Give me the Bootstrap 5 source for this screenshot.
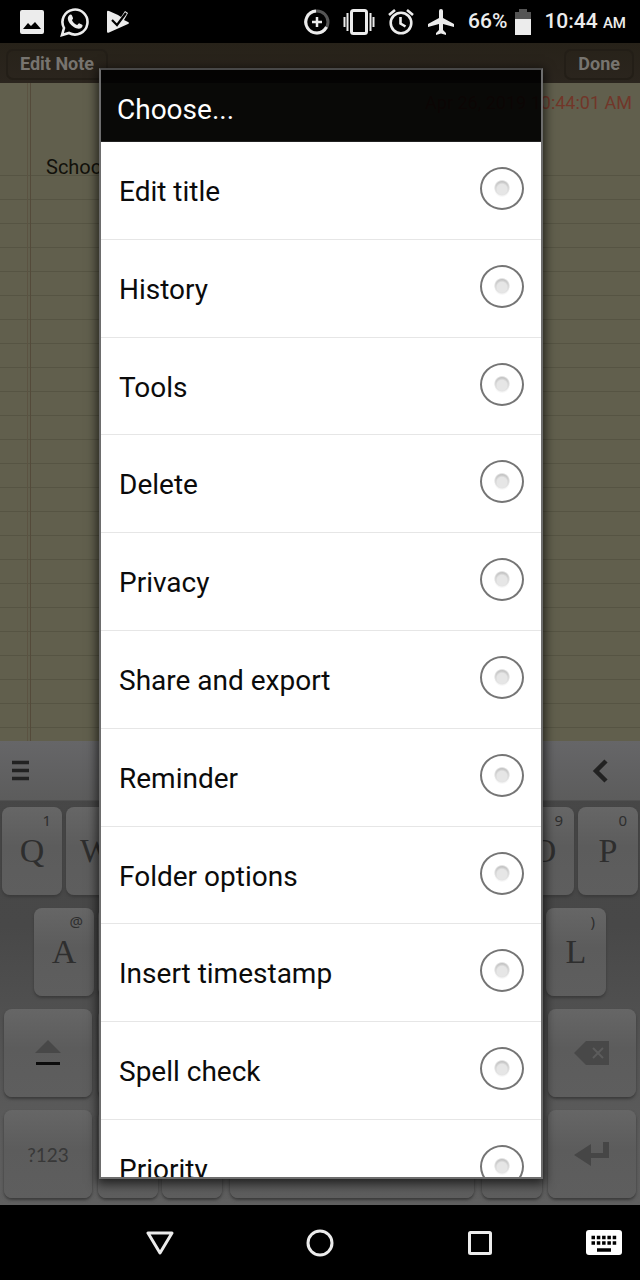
<!DOCTYPE html>
<html lang="en">
<head>
<meta charset="utf-8">
<meta name="viewport" content="width=device-width, initial-scale=1">
<title>Edit Note</title>
<link href="https://cdn.jsdelivr.net/npm/bootstrap@5.3.0/dist/css/bootstrap.min.css" rel="stylesheet">
<style>
body { font-family: Roboto, "Noto Sans", sans-serif; background: #000; line-height: 1.2; }
button { font-family: inherit; }
svg { display: block; flex: none; }

.status-bar { height: 43px; padding: 0 14px 0 20px; color: #ececec; font-size: 21px; font-weight: 500; }
.status-bar .ampm { font-size: 15px; }
.status-icons { gap: 13px; }

.note-bar { height: 40px; padding: 2px 6px 0; background: linear-gradient(#272219, #2b251e); }
.note-bar .btn { height: 31px; padding: 0 12px; font-size: 18px; font-weight: 700; line-height: 1; color: #77746f; border: 2px solid #231e17; border-radius: 7px; }

.paper { background-color: #615f4d; background-image:
    linear-gradient(90deg, transparent 27px, #5b5342 27px, #5b5342 28px, transparent 28px, transparent 30px, #544a3a 30px, #544a3a 31px, transparent 31px),
    repeating-linear-gradient(transparent 0 23px, #565443 23px 24px);
  background-position: 0 0, 0 69px; background-repeat: no-repeat; padding: 9px 8px 0 46px; }
.paper .stamp { font-size: 18px; color: #713629; }
.paper .note-text { font-size: 20px; color: #12110b; margin-top: 41px; }

.keyboard { background: linear-gradient(#464646, #484848 40%, #5c5c5c 85%, #5f5f5f); }
.suggest { height: 60px; padding: 0 32px 0 11px; background: linear-gradient(#666668, #5c5c5c); border-bottom: 1px solid #505050; }
.suggest .btn { padding: 0; border: 0; }
.keys { padding: 6px 0 7px; gap: 13px; }
.key-row { gap: 4px; padding: 0 2px; }
.key-row.inset { padding: 0 34px; }
.key-row.wide { gap: 6px; padding: 0 4px; }
.keycap { position: relative; flex: 1 1 0; min-width: 0; height: 88px; padding: 0; border: 0; border-radius: 8px; background: linear-gradient(#666, #5c5c5c 45%, #5e5e5e); box-shadow: 0 2px 3px #3a3a3a; color: #2e2e2e; font-family: "Liberation Serif", serif; font-size: 34px; line-height: 1; display: flex; align-items: center; justify-content: center; }
.keycap small { position: absolute; top: 4px; right: 11px; font-family: "Noto Sans", sans-serif; font-size: 15px; line-height: 18px; }
.keycap.side { flex: 0 0 88px; }
.keycap.label-key { font-family: Lato, sans-serif; font-size: 19px; color: #383838; }
.keycap.space-key { flex: 0 0 244px; margin: 0 4px; }

.dialog-layer { position: absolute; inset: 0; padding: 25px 97px 26px 99px; }
.chooser { border: 2px solid #6d6d6d; border-top-color: #484848; box-shadow: 0 3px 10px 2px rgba(0,0,0,.65); }
.chooser-title { height: 72px; padding: 8px 16px 0; background: rgba(0,0,0,.9); color: #fff; font-size: 28px; border-bottom: 1px solid #222; }
.options { display: grid; grid-template-rows: repeat(10, minmax(0, 1fr)) 57px; flex: 1 1 0; min-height: 0; overflow: hidden; background: #fff; }
.option { display: flex; align-items: start; justify-content: space-between; padding: 25px 17px 0 18px; font-size: 28px; line-height: 50px; color: #0b0b0b; border-bottom: 1px solid #e6e6e6; min-height: 0; overflow: hidden; }
.option:last-child { border: 0; }
.option input { appearance: none; flex: none; width: 44px; height: 43px; margin: 0; border: 2px solid #757575; border-radius: 50%; background: radial-gradient(circle 8px at 50% 52%, #e6e6e6 0 5px, transparent 8px), radial-gradient(circle 8px at 50% 48%, #bbb 0 6px, transparent 8px) #fff; }

.nav-bar { height: 75px; display: grid; grid-template-columns: 1fr 2fr 2fr 2fr 1fr; }
.nav-bar .btn { border: 0; padding: 0; display: flex; align-items: center; justify-content: center; }
</style>
</head>
<body>
<div class="d-flex flex-column vh-100 overflow-hidden">
  <header class="status-bar d-flex align-items-center flex-shrink-0">
    <svg width="24" height="24" viewBox="0 0 24 24"><path fill="#ececec" fill-rule="evenodd" d="M2 0h20a2 2 0 0 1 2 2v20a2 2 0 0 1-2 2H2a2 2 0 0 1-2-2V2a2 2 0 0 1 2-2zM3 19h18l-6-7-4 4-3-3z"/></svg>
    <svg class="ms-3" width="30" height="30" viewBox="0 0 30 30"><path d="M2 28l2-7A12.500 12.500 0 1 1 9 26z" fill="none" stroke="#ececec" stroke-width="2.600"/><path fill="#ececec" d="M9 8.500c1-1.500 2.500-1.500 3 0l1 2.500c.3 1-1 1.500-1 2.300 1.200 2.500 3 3.800 5 4.700 1 0 1.500-2 2.500-1.600l2.700 1.300c1 .5 0 2.600-1 3.300-2 1.400-5 .5-7.500-1C10.500 18 8 14.500 7.800 12c0-1.500.4-2.700 1.200-3.500z"/></svg>
    <svg class="ms-3" width="24" height="24" viewBox="0 0 24 24"><path fill="#ececec" d="M1 2Q1 0 3 1l9 4 3 2 4-6 3 2-4 7 4 2q2 1 0 2L3 22.500q-2 1-2-1z"/><path d="M6 10l5 5 9-12" fill="none" stroke="#000" stroke-width="2.200"/></svg>
    <div class="status-icons d-flex align-items-center ms-auto">
      <svg width="26" height="26" viewBox="0 0 26 26" fill="none" stroke-width="3"><circle cx="13" cy="13" r="11" stroke="#555"/><path d="M12 2a11 11 0 1 0 10.500 16" stroke="#ececec"/><path d="M13 8v10M8 13h10" stroke="#ececec" stroke-width="2.500"/></svg>
      <svg width="32" height="26" viewBox="0 0 32 26" fill="none" stroke="#ececec"><rect x="8.500" y="1.500" width="15" height="23" rx="2" stroke-width="3"/><path d="M4.500 4v18M1.500 8v10M27.500 4v18M30.500 8v10" stroke-width="2"/></svg>
      <svg width="26" height="26" viewBox="0 0 26 26" fill="none" stroke="#ececec" stroke-width="2.600"><circle cx="13" cy="14" r="10.300"/><path d="M1 6l6-5M25 6l-6-5M12.500 8v6.500l5 3"/></svg>
      <svg width="28" height="26" viewBox="0 0 28 26"><path fill="#ececec" d="M14 0q2 0 2 2v7l11 6v3l-11-3v6l3 3v2l-5-1.500L9 26v-2l3-3v-6L1 18v-3l11-6V2q0-2 2-2z"/></svg>
      <div class="d-flex align-items-center gap-2"><span>66%</span>
      <svg width="16" height="26" viewBox="0 0 16 26"><path fill="#555" d="M4 0h8v3h4v7H0V3h4z"/><path fill="#ececec" d="M0 10h16v16H0z"/></svg></div>
      <span>10:44 <span class="ampm">AM</span></span>
    </div>
  </header>

  <main class="position-relative flex-grow-1 d-flex flex-column">
    <div class="note-bar d-flex align-items-center justify-content-between">
      <button class="btn" type="button">Edit Note</button>
      <button class="btn" type="button">Done</button>
    </div>
    <section class="paper flex-grow-1">
      <div class="stamp text-end">Apr 26, 2019 10:44:01 AM</div>
      <div class="note-text">School</div>
    </section>

    <section class="keyboard" aria-label="Keyboard">
      <div class="suggest d-flex align-items-center justify-content-between">
        <button class="btn" type="button" aria-label="Menu"><svg width="18" height="22" viewBox="0 0 18 22"><path d="M1 2.500h17M1 10.500h17M1 18.500h17" stroke="#222" stroke-width="3.500"/></svg></button>
        <button class="btn" type="button" aria-label="Collapse"><svg width="16" height="24" viewBox="0 0 16 24"><path d="M14 2L4 12l10 10" fill="none" stroke="#222" stroke-width="4.500"/></svg></button>
      </div>
      <div class="keys d-flex flex-column">
        <div class="key-row d-flex">
          <button class="keycap">Q<small>1</small></button><button class="keycap">W</button><button class="keycap" aria-label="E"></button><button class="keycap" aria-label="R"></button><button class="keycap" aria-label="T"></button><button class="keycap" aria-label="Y"></button><button class="keycap" aria-label="U"></button><button class="keycap" aria-label="I"></button><button class="keycap">O<small>9</small></button><button class="keycap">P<small>0</small></button>
        </div>
        <div class="key-row inset d-flex">
          <button class="keycap">A<small>@</small></button><button class="keycap" aria-label="S"></button><button class="keycap" aria-label="D"></button><button class="keycap" aria-label="F"></button><button class="keycap" aria-label="G"></button><button class="keycap" aria-label="H"></button><button class="keycap" aria-label="J"></button><button class="keycap" aria-label="K"></button><button class="keycap">L<small>)</small></button>
        </div>
        <div class="key-row wide d-flex">
          <button class="keycap side" aria-label="Shift"><svg width="26" height="26" viewBox="0 0 26 26"><path fill="#484848" d="M13 0l13 13H0z"/><path fill="#0c0c0c" d="M1 22h24v3H1z"/></svg></button>
          <div class="d-flex flex-grow-1 gap-1"><button class="keycap" aria-label="Z"></button><button class="keycap" aria-label="X"></button><button class="keycap" aria-label="C"></button><button class="keycap" aria-label="V"></button><button class="keycap" aria-label="B"></button><button class="keycap" aria-label="N"></button><button class="keycap" aria-label="M"></button></div>
          <button class="keycap side" aria-label="Backspace"><svg width="36" height="24" viewBox="0 0 36 24"><path fill="#484848" d="M0 12L12 0h23v24H12z"/><path d="M19 7l10 10M29 7L19 17" stroke="#5c5c5c" stroke-width="2"/></svg></button>
        </div>
        <div class="key-row wide d-flex">
          <button class="keycap label-key side">?123</button>
          <div class="d-flex flex-grow-1 gap-1"><button class="keycap" aria-label="Comma"></button><button class="keycap" aria-label="Slash"></button><button class="keycap space-key" aria-label="Space"></button><button class="keycap" aria-label="Period"></button></div>
          <button class="keycap side" aria-label="Enter"><svg width="36" height="24" viewBox="0 0 36 24"><path fill="#464646" d="M0 13L17 2v9h12V0h6v16H17v8z"/></svg></button>
        </div>
      </div>
    </section>

    <div class="dialog-layer">
      <form class="chooser h-100 d-flex flex-column" role="dialog" aria-labelledby="chooser-title">
        <div class="chooser-title d-flex align-items-center flex-shrink-0"><span id="chooser-title">Choose...</span></div>
        <div class="options">
          <label class="option">Edit title<input type="radio" name="action"></label>
          <label class="option">History<input type="radio" name="action"></label>
          <label class="option">Tools<input type="radio" name="action"></label>
          <label class="option">Delete<input type="radio" name="action"></label>
          <label class="option">Privacy<input type="radio" name="action"></label>
          <label class="option">Share and export<input type="radio" name="action"></label>
          <label class="option">Reminder<input type="radio" name="action"></label>
          <label class="option">Folder options<input type="radio" name="action"></label>
          <label class="option">Insert timestamp<input type="radio" name="action"></label>
          <label class="option">Spell check<input type="radio" name="action"></label>
          <label class="option">Priority<input type="radio" name="action"></label>
        </div>
      </form>
    </div>
  </main>

  <nav class="nav-bar flex-shrink-0" aria-label="System">
    <span></span>
    <button class="btn" type="button" aria-label="Back"><svg width="28" height="24" viewBox="0 0 28 24"><path d="M2 2h24L14 22z" fill="none" stroke="#ececec" stroke-width="3" stroke-linejoin="round"/></svg></button>
    <button class="btn" type="button" aria-label="Home"><svg width="28" height="28" viewBox="0 0 28 28"><circle cx="14" cy="14" r="12" fill="none" stroke="#ececec" stroke-width="3"/></svg></button>
    <button class="btn" type="button" aria-label="Recent apps"><svg width="24" height="24" viewBox="0 0 24 24"><rect x="1.500" y="1.500" width="21" height="21" rx="1" fill="none" stroke="#ececec" stroke-width="3"/></svg></button>
    <button class="btn ps-2" type="button" aria-label="Switch keyboard"><svg width="36" height="25" viewBox="0 0 36 25"><rect width="36" height="25" rx="3" fill="#fff"/><path d="M5.500 7.500h25M5.500 13h25" stroke="#000" stroke-width="3.500" stroke-dasharray="3.500 1.800"/><path d="M11 20h14" stroke="#000" stroke-width="3.500"/></svg></button>
  </nav>
</div>
<script src="https://cdn.jsdelivr.net/npm/bootstrap@5.3.0/dist/js/bootstrap.bundle.min.js"></script>
</body>
</html>
